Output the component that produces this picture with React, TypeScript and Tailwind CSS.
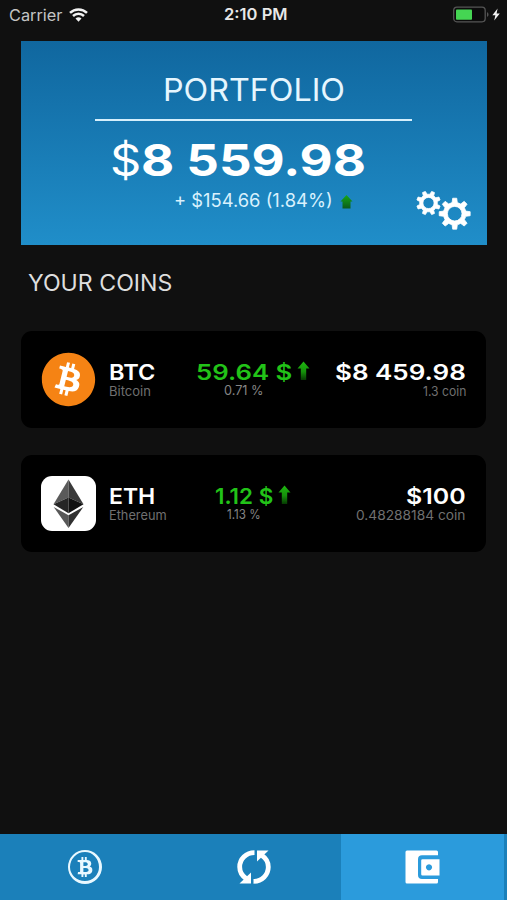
import { useLayoutEffect, useRef, useState, type ReactNode } from 'react';
import { FaBitcoin, FaBtc } from 'react-icons/fa';

interface WideTextProps {
  width: number;
  className?: string;
  children: ReactNode;
}

// Stretches a line of text so it fills the given width.
function WideText({ width, className = '', children }: WideTextProps) {
  const ref = useRef<HTMLSpanElement>(null);
  const [scale, setScale] = useState(1);

  useLayoutEffect(() => {
    if (ref.current) setScale(width / ref.current.offsetWidth);
  }, [width]);

  return (
    <span className={`block whitespace-nowrap ${className}`} style={{ width }}>
      <span ref={ref} className="inline-block origin-left align-top" style={{ transform: `scaleX(${scale})` }}>
        {children}
      </span>
    </span>
  );
}

interface Coin {
  symbol: string;
  name: string;
  nameWidth: number;
  change: string;
  changeWidth: number;
  percent: string;
  percentWidth: number;
  value: string;
  valueWidth: number;
  amount: string;
  amountWidth: number;
  logo: ReactNode;
}

function gearPath(cx: number, cy: number, outer: number, root: number, hole: number, turn: number) {
  const points: string[] = [];
  for (let i = 0; i < 8; i++) {
    const mid = ((i * 45 + turn - 90) * Math.PI) / 180;
    const steps = [
      [root, -0.23],
      [outer, -0.13],
      [outer, 0.13],
      [root, 0.23],
    ];
    for (const [r, a] of steps) {
      points.push(`${(cx + r * Math.cos(mid + a)).toFixed(2)} ${(cy + r * Math.sin(mid + a)).toFixed(2)}`);
    }
  }
  return `M${points.join('L')}ZM${cx - hole} ${cy}a${hole} ${hole} 0 1 0 ${hole * 2} 0a${hole} ${hole} 0 1 0 ${-hole * 2} 0Z`;
}

function GearsIcon() {
  return (
    <svg width="56" height="42" viewBox="0 0 56 42" fill="#fff" stroke="#fff" strokeWidth="0.8" strokeLinejoin="round">
      <path fillRule="evenodd" d={gearPath(13.5, 12, 12, 8.9, 5.6, 22.5)} />
      <path fillRule="evenodd" d={gearPath(39.7, 22.7, 15.6, 11.4, 7.3, 0)} />
    </svg>
  );
}

function ArrowUp({ id }: { id: string }) {
  return (
    <svg width="13" height="20" viewBox="0 0 13 20">
      <defs>
        <linearGradient id={id} x1="0" y1="0" x2="0" y2="1">
          <stop offset="0" stopColor="#1fb810" />
          <stop offset="0.55" stopColor="#15910b" />
          <stop offset="1" stopColor="#063a02" />
        </linearGradient>
      </defs>
      <path d="M6.5 0.5 12.5 7.5H9.2V19H3.8V7.5H0.5Z" fill={`url(#${id})`} />
    </svg>
  );
}

function BtcLogo() {
  return (
    <div className="flex size-[55px] items-center justify-center rounded-full bg-[radial-gradient(#fff_60%,transparent_61%)]">
      <FaBitcoin className="size-[55px] text-[#f58314]" />
    </div>
  );
}

function EthLogo() {
  return (
    <svg width="55" height="55" viewBox="0 0 55 55">
      <rect width="55" height="55" rx="11" fill="#fff" />
      <path d="M27.5 3.5 12.5 28.3 27.5 21.5Z" fill="#5a5a5a" />
      <path d="M27.5 3.5 42.5 28.3 27.5 21.5Z" fill="#3a3a3a" />
      <path d="M12.5 28.3 27.5 21.5V37.2Z" fill="#262626" />
      <path d="M42.5 28.3 27.5 21.5V37.2Z" fill="#121212" />
      <path d="M12.7 31 27.5 39.3V52Z" fill="#585858" />
      <path d="M42.3 31 27.5 39.3V52Z" fill="#303030" />
    </svg>
  );
}

const COINS: Coin[] = [
  {
    symbol: 'BTC',
    name: 'Bitcoin',
    nameWidth: 42,
    change: '59.64 $',
    changeWidth: 96,
    percent: '0.71 %',
    percentWidth: 40,
    value: '$8 459.98',
    valueWidth: 131,
    amount: '1.3 coin',
    amountWidth: 43,
    logo: <BtcLogo />,
  },
  {
    symbol: 'ETH',
    name: 'Ethereum',
    nameWidth: 58,
    change: '1.12 $',
    changeWidth: 58,
    percent: '1.13 %',
    percentWidth: 34,
    value: '$100',
    valueWidth: 60,
    amount: '0.48288184 coin',
    amountWidth: 110,
    logo: <EthLogo />,
  },
];

function StatusBar() {
  return (
    <div className="flex h-[30px] items-center justify-between pl-[9px] pr-[6px]">
      <div className="flex flex-1 items-center gap-2">
        <WideText width={53} className="text-[16px] leading-[30px] text-[#c4c4c4]">Carrier</WideText>
        <svg width="19" height="14" viewBox="0 0 19 14" fill="none" stroke="#f2f2f2" strokeWidth="2.5" className="-ml-px -mt-px">
          <path d="M1 4.9a12.2 12.2 0 0 1 17 0" />
          <path d="M4 8a8 8 0 0 1 11 0" />
          <path d="M9.5 13.8 6.5 10.6a4.4 4.4 0 0 1 6 0Z" fill="#f2f2f2" stroke="none" />
        </svg>
      </div>
      <WideText width={64} className="ml-px text-[15.5px] font-semibold leading-[30px] text-[#e8e8e8]">2:10 PM</WideText>
      <div className="flex flex-1 items-center justify-end">
        <svg width="48" height="17" viewBox="0 0 48 17" className="-mt-px">
          <rect x="0.7" y="1.2" width="31.5" height="14.6" rx="3.2" fill="#0c0c0c" stroke="#555" strokeWidth="1.3" />
          <rect x="3" y="3.4" width="16" height="10.4" rx="0.8" fill="#45d553" />
          <path d="M34 6.2c2 .6 2 4 0 4.6Z" fill="#555" />
          <path d="M44.6 2.6 39.4 9.2h3L41.2 14.4l5.6-7H43.6Z" fill="#f2f2f2" />
        </svg>
      </div>
    </div>
  );
}

function PortfolioCard() {
  return (
    <section className="relative mx-[21px] mt-[11px] flex h-[204px] w-[466px] flex-col items-center bg-linear-to-b from-[#10679f] to-[#208ec9] text-white">
      <h1 className="mr-px mt-[31px]">
        <WideText width={182} className="text-[31px] leading-9 text-[#e6f6fe]">PORTFOLIO</WideText>
      </h1>
      <div className="mr-px mt-[11px] h-[2px] w-[317px] bg-[#d5effc]" />
      <div className="mr-[33px] mt-[15px] flex h-[48px] items-center">
        <WideText width={31} className="text-[44px] leading-[48px]">$</WideText>
        <WideText width={225} className="text-[44px] font-bold leading-[48px]">8 559.98</WideText>
      </div>
      <div className="ml-[19px] mt-[5px] flex items-center gap-[7px]">
        <WideText width={159} className="text-[18px] leading-6 text-[#d9f1fd]">+ $154.66 (1.84%)</WideText>
        <svg width="13" height="14" viewBox="0 0 13 14" className="mt-px">
          <defs>
            <linearGradient id="total-up" x1="0" y1="0" x2="0" y2="1">
              <stop offset="0" stopColor="#16a816" />
              <stop offset="1" stopColor="#0b5a1c" />
            </linearGradient>
          </defs>
          <path d="M6.5 0 12.5 6.5H10.5V13.5H2.5V6.5H0.5Z" fill="url(#total-up)" />
        </svg>
      </div>
      <button type="button" className="absolute bottom-[12px] right-[16px]">
        <GearsIcon />
      </button>
    </section>
  );
}

function CoinRow({ coin }: { coin: Coin }) {
  return (
    <li className="flex h-[97px] items-center rounded-[11px] bg-black pl-5 pr-5">
      {coin.logo}
      <div className="ml-[13px] w-[75px] pt-[1px]">
        <WideText width={46} className="text-[22px] font-semibold leading-[22px] text-white">{coin.symbol}</WideText>
        <WideText width={coin.nameWidth} className="text-[13px] leading-[17px] text-[#707070]">{coin.name}</WideText>
      </div>
      <div className="flex w-[138px] justify-center gap-[5px]">
        <div className="flex flex-col items-center">
          <WideText width={coin.changeWidth} className="text-[22px] font-semibold leading-[22px] text-[#22c318]">{coin.change}</WideText>
          <WideText width={coin.percentWidth} className="text-[13px] leading-[15px] text-[#858585]">{coin.percent}</WideText>
        </div>
        <ArrowUp id={`up-${coin.symbol}`} />
      </div>
      <div className="ml-auto flex flex-col items-end pt-[1px]">
        <WideText width={coin.valueWidth} className="text-[22px] font-semibold leading-[22px] text-white">{coin.value}</WideText>
        <WideText width={coin.amountWidth} className="text-[13px] leading-[17px] text-[#707070]">{coin.amount}</WideText>
      </div>
    </li>
  );
}

function TabBar() {
  return (
    <nav className="flex h-[66px] bg-[#1b80ba] pr-[3px]">
      <button type="button" className="flex w-[170px] items-center justify-center">
        <span className="flex size-[34px] items-center justify-center rounded-full border-2 border-r-[3px] border-b-[3px] border-[#e9f8ff]">
          <FaBtc className="size-[20px] text-[#e9f8ff]" />
        </span>
      </button>
      <button type="button" className="flex w-[171px] items-center justify-center pr-[3px]">
        <svg width="34" height="34" viewBox="0 0 34 34" fill="none">
          <g id="half-turn">
            <path d="M16.5 31.3C24.8 31.3 31.3 25 31.3 17C31.3 12.2 28.8 8.2 25 5.6" stroke="#fff" strokeWidth="4.8" />
            <path d="M20 0.5H31.5L20 11.5Z" fill="#fff" />
          </g>
          <use href="#half-turn" transform="rotate(180 17 17)" />
        </svg>
      </button>
      <button type="button" className="flex flex-1 items-center justify-center bg-[#2b9bdc]">
        <svg width="35" height="34" viewBox="0 0 35 34">
          <path d="M2 .5H31.5Q33 .5 33 2V5.3H17Q13 5.3 13 9.3V25Q13 29 17 29H33V32Q33 33.5 31.5 33.5H2Q.5 33.5 .5 32V2Q.5 .5 2 .5Z" fill="#fff" />
          <path fillRule="evenodd" d="M17.5 9.3H34.5V25.5H17.5Q16.2 25.5 16.2 24.2V10.6Q16.2 9.3 17.5 9.3ZM24 14.2a3.1 3.1 0 1 0 .01 0Z" fill="#fff" />
        </svg>
      </button>
    </nav>
  );
}

export default function App() {
  return (
    <div className="flex h-[900px] w-[507px] flex-col overflow-hidden bg-[#101010] font-[Inter,'Liberation_Sans',sans-serif]">
      <StatusBar />
      <PortfolioCard />
      <h2 className="ml-[28px] mt-[22px]">
        <WideText width={144} className="text-[22.5px] leading-8 text-[#dedede]">YOUR COINS</WideText>
      </h2>
      <ul className="mx-[21px] mt-[32px] flex flex-1 flex-col gap-[27px]">
        {COINS.map((coin) => (
          <CoinRow key={coin.symbol} coin={coin} />
        ))}
      </ul>
      <TabBar />
    </div>
  );
}
